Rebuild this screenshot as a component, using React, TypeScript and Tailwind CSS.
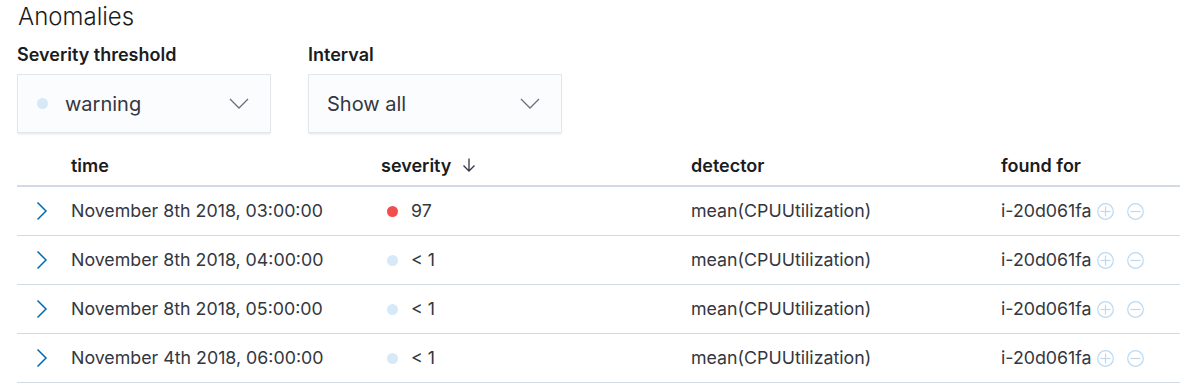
import React from 'react';

const rows = [
  { time: 'November 8th 2018, 03:00:00', severity: '97', critical: true },
  { time: 'November 8th 2018, 04:00:00', severity: '< 1', critical: false },
  { time: 'November 8th 2018, 05:00:00', severity: '< 1', critical: false },
  { time: 'November 4th 2018, 06:00:00', severity: '< 1', critical: false },
];

const Chevron = ({ className = '' }: { className?: string }) => (
  <svg width="20" height="12" viewBox="0 0 20 12" className={className}>
    <path d="M1 1 L10 10 L19 1" fill="none" stroke="#69707d" strokeWidth="1.3" />
  </svg>
);

const Select = ({ label, value, dot }: { label: string; value: string; dot?: boolean }) => (
  <div className="flex flex-col">
    <div className="text-[18px] font-semibold text-[#1a1c21] leading-5 mb-[9px]">{label}</div>
    <div className="w-[254px] h-[59px] flex items-center justify-between pl-[18px] pr-[21px] bg-[#fbfcfd] border border-[#e3e6eb] shadow-[0_2px_2px_-1px_rgba(152,162,179,0.3)]">
      <div className="flex items-center">
        {dot && <span className="w-[11px] h-[11px] rounded-full bg-[#d6e9f8] mr-[17px] ml-[1px]" />}
        <span className="text-[20px] text-[#343741]">{value}</span>
      </div>
      <Chevron />
    </div>
  </div>
);

const CircleIcon = ({ plus }: { plus?: boolean }) => (
  <svg width="17" height="17" viewBox="0 0 17 17">
    <circle cx="8.5" cy="8.5" r="7.8" fill="none" stroke="#bcd9f0" strokeWidth="1.2" />
    <path d="M3.5 8.5 H13.5" stroke="#bcd9f0" strokeWidth="1.2" />
    {plus && <path d="M8.5 3.5 V13.5" stroke="#bcd9f0" strokeWidth="1.2" />}
  </svg>
);

export default function App() {
  return (
    <div className="w-[1180px] h-[390px] bg-white pl-[17px] overflow-hidden" style={{ fontFamily: 'Inter, "Noto Sans", sans-serif' }}>
      <h2 className="text-[24px] font-light text-[#1a1c21] leading-7 pt-[3px] pl-[1px]">Anomalies</h2>
      <div className="flex gap-[37px] mt-[14px]">
        <Select label="Severity threshold" value="warning" dot />
        <Select label="Interval" value="Show all" />
      </div>
      <div className="mt-[8px]">
        <div className="grid grid-cols-[54px_310px_310px_310px_1fr] h-[46px] pt-[4px] items-center border-b-2 border-[#d3dae6] text-[18px] font-semibold text-[#1a1c21]">
          <div />
          <div>time</div>
          <div className="flex items-center">
            severity
            <svg width="16" height="16" viewBox="0 0 16 16" className="ml-[10px]">
              <path d="M8 1.5 V14 M2.5 8.5 L8 14 L13.5 8.5" fill="none" stroke="#343741" strokeWidth="1.3" />
            </svg>
          </div>
          <div>detector</div>
          <div>found for</div>
        </div>
        {rows.map((r, i) => (
          <div key={i} className="grid grid-cols-[54px_310px_310px_310px_1fr] h-[49px] items-center border-b border-[#d3dae6] text-[17.8px] text-[#343741]">
            <div className="pl-[19px] flex items-center">
              <svg width="12" height="20" viewBox="0 0 12 20">
                <path d="M1.5 1.5 L10 10 L1.5 18.5" fill="none" stroke="#006bb4" strokeWidth="1.5" />
              </svg>
            </div>
            <div>{r.time}</div>
            <div className="flex items-center pl-[6px]">
              <span className={`w-[11px] h-[11px] rounded-full mr-[13px] ${r.critical ? 'bg-[#f04e4e]' : 'bg-[#d6e9f8]'}`} />
              {r.severity}
            </div>
            <div>mean(CPUUtilization)</div>
            <div className="flex items-center">
              <span>i-20d061fa</span>
              <span className="ml-[5px] flex items-center"><CircleIcon plus /></span>
              <span className="ml-[13px] flex items-center"><CircleIcon /></span>
            </div>
          </div>
        ))}
      </div>
    </div>
  );
}
